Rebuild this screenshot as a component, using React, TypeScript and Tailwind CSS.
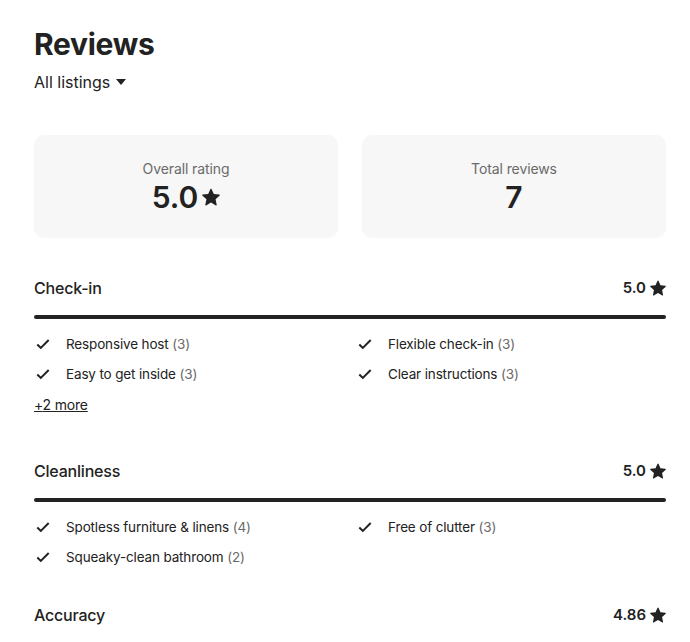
import React from 'react';

interface Tag {
  label: string;
  count: number;
}

interface Category {
  name: string;
  rating: string;
  tags: Tag[];
  more?: number;
}

const categories: Category[] = [
  {
    name: 'Check-in',
    rating: '5.0',
    tags: [
      { label: 'Responsive host', count: 3 },
      { label: 'Flexible check-in', count: 3 },
      { label: 'Easy to get inside', count: 3 },
      { label: 'Clear instructions', count: 3 },
    ],
    more: 2,
  },
  {
    name: 'Cleanliness',
    rating: '5.0',
    tags: [
      { label: 'Spotless furniture & linens', count: 4 },
      { label: 'Free of clutter', count: 3 },
      { label: 'Squeaky-clean bathroom', count: 2 },
    ],
  },
  {
    name: 'Accuracy',
    rating: '4.86',
    tags: [],
  },
];

const Star: React.FC<{ className?: string }> = ({ className }) => (
  <svg viewBox="0 0 32 32" className={className} fill="currentColor" aria-hidden="true">
    <path d="M15.1 1.58l-4.13 8.88-9.86 1.27a1 1 0 0 0-.54 1.74l7.3 6.57-1.97 9.850a1 1 0 0 0 1.48 1.06l8.62-5 8.63 5a1 1 0 0 0 1.48-1.06l-1.97-9.85 7.3-6.57a1 1 0 0 0-.55-1.73l-9.86-1.28-4.12-8.88a1 1 0 0 0-1.82 0z" />
  </svg>
);

const Check: React.FC = () => (
  <svg viewBox="0 0 32 32" className="w-[14px] h-[14px] shrink-0" fill="none" stroke="#222222" strokeWidth="4.5" aria-hidden="true">
    <path d="M3 17l8 8L29 7" />
  </svg>
);

const StatCard: React.FC<{ label: string; value: string; star?: boolean }> = ({ label, value, star }) => (
  <div className="bg-[#f7f7f7] rounded-[10px] h-[103px] flex flex-col items-center justify-center">
    <div className="text-[14px] leading-[18px] text-[#6a6a6a] tracking-[-0.1px]">{label}</div>
    <div className="flex items-center gap-[4px] mt-[2px]">
      <span className="text-[30px] leading-[34px] font-semibold text-[#222222]">{value}</span>
      {star && <Star className="w-[18px] h-[18px] text-[#222222]" />}
    </div>
  </div>
);

const CategorySection: React.FC<{ cat: Category }> = ({ cat }) => (
  <section className={cat.more ? 'mb-[43px]' : 'mb-[31px]'}>
    <div className="flex items-center justify-between h-[24px]">
      <h3 className="text-[16px] font-medium text-[#222222] tracking-[-0.2px]">{cat.name}</h3>
      <div className="flex items-center gap-[4px] text-[15px] font-semibold text-[#222222]">
        {cat.rating}
        <Star className="w-[16px] h-[16px]" />
      </div>
    </div>
    {cat.tags.length > 0 && (
      <>
        <div className="h-[4px] bg-[#222222] rounded-full mt-[15px] mb-[10px]" />
        <ul className="grid grid-cols-2 gap-x-[12px]">
          {cat.tags.map((t) => (
            <li key={t.label} className="flex items-center h-[30px] pl-[2px]">
              <Check />
              <span className="ml-[16px] text-[13.5px] tracking-[-0.15px] text-[#222222]">
                {t.label} <span className="text-[#6a6a6a]">({t.count})</span>
              </span>
            </li>
          ))}
        </ul>
        {cat.more && (
          <button className="mt-[6px] text-[14px] leading-[20px] underline text-[#222222] tracking-[-0.2px]">
            +{cat.more} more
          </button>
        )}
      </>
    )}
  </section>
);

export default function App() {
  return (
    <div className="h-screen overflow-hidden bg-white pl-[34px] pr-[24px] pt-[24px] text-[#222222]" style={{ fontFamily: 'Inter, "Noto Sans", sans-serif' }}>
      <h1 className="text-[30px] leading-[40px] font-bold tracking-[-0.3px]">Reviews</h1>
      <button className="flex items-center gap-[6px] h-[24px] mt-[6px] text-[16px]">
        All listings
        <svg viewBox="0 0 10 6" className="w-[10px] h-[6px]" fill="#222222" aria-hidden="true">
          <path d="M0 0h10L5 6z" />
        </svg>
      </button>
      <div className="grid grid-cols-2 gap-[24px] mt-[41px] mb-[38px]">
        <StatCard label="Overall rating" value="5.0" star />
        <StatCard label="Total reviews" value="7" />
      </div>
      {categories.map((c) => (
        <CategorySection key={c.name} cat={c} />
      ))}
    </div>
  );
}
